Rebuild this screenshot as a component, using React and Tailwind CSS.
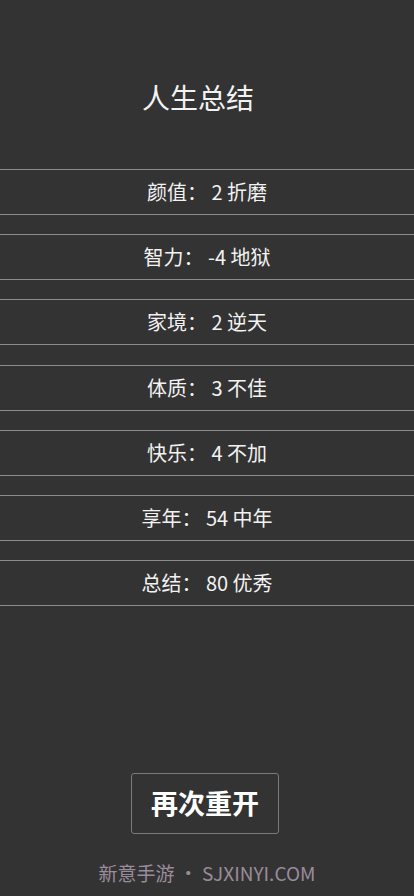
import React from "react";

const rows = [
  ["颜值", "2 折磨"],
  ["智力", "-4 地狱"],
  ["家境", "2 逆天"],
  ["体质", "3 不佳"],
  ["快乐", "4 不加"],
  ["享年", "54 中年"],
  ["总结", "80 优秀"],
];

function App() {
  return (
    <div
      className="h-[896px] bg-[#333333] text-[#f2f2f2] flex flex-col overflow-hidden"
      style={{ fontFamily: '"Noto Sans CJK SC", "Noto Sans", sans-serif' }}
    >
      <div className="pt-[77px] pr-[18px] text-center text-[28px] leading-[40px]">人生总结</div>

      <div className="mt-[52px] flex flex-col gap-[19.2px]">
        {rows.map(([label, value]) => (
          <div
            key={label}
            className="h-[46px] border-y border-[#8c8c8c] flex items-center justify-center text-[20px] whitespace-pre"
          >
            {label}： {value}
          </div>
        ))}
      </div>

      <div className="flex-1" />

      <div className="flex justify-center pr-[4px]">
        <button className="w-[148px] h-[61px] border border-[#7a7a7a] rounded-[3px] text-[27px] font-bold text-white">
          再次重开
        </button>
      </div>

      <div className="mt-[25px] mb-[9px] text-center text-[19px] leading-[28px] text-[#9a8c9b]">
        新意手游 • SJXINYI.COM
      </div>
    </div>
  );
}

export default App;
